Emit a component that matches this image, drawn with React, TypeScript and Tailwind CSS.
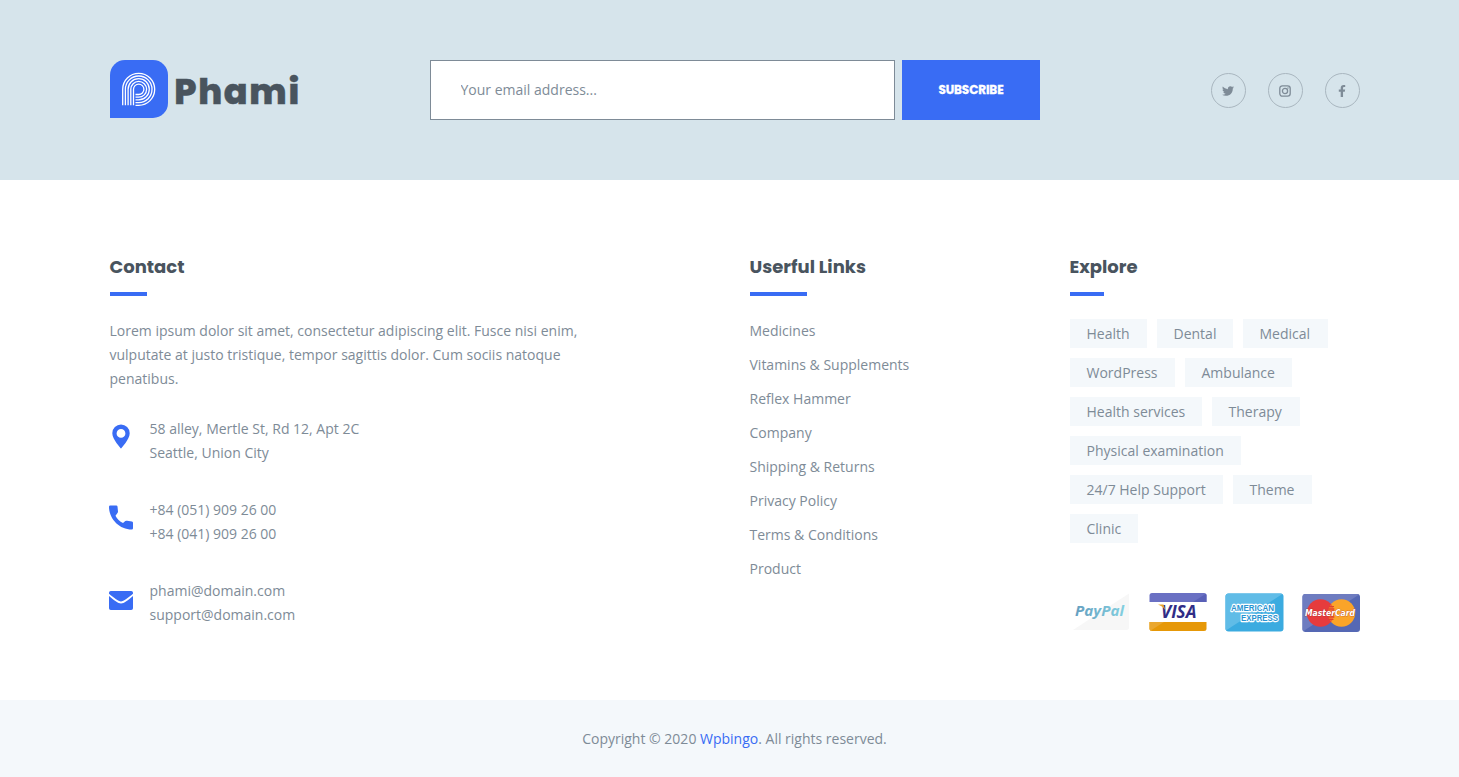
import React from "react";
import { FaTwitter, FaInstagram, FaFacebookF } from "react-icons/fa";

const display = "font-['Poppins','Inter',sans-serif] font-bold text-[#49545e]";

function Logo() {
  const rings = [16, 13.3, 10.6, 7.9, 5.2];
  return (
    <div className="flex w-80 shrink-0">
      <svg width="58" height="58" viewBox="0 0 58 58" className="shrink-0">
        <path d="M15 0H43A15 15 0 0 1 58 15V43A15 15 0 0 1 43 58H0V15A15 15 0 0 1 15 0Z" fill="#396cf4" />
        <g fill="none" stroke="#fff" strokeWidth="1.3">
          {rings.map((r) => (
            <path key={r} d={`M${28.7 - r} 45.200V29.300A${r} ${r} 0 1 1 28.700 ${29.3 + r}H25.500`} />
          ))}
        </g>
      </svg>
      <svg width="140" height="58" viewBox="0 0 140 58" className="shrink-0">
        <text x="6.2" y="44" textLength="125" lengthAdjust="spacing" fill="#49545e" stroke="#49545e" strokeWidth="0.4" className="font-['Poppins','Inter',sans-serif] text-[35px] font-extrabold">Phami</text>
      </svg>
    </div>
  );
}

function Heading({ children, bar }: { children: string; bar: string }) {
  return (
    <div className="h-[63px] shrink-0">
      <h2 className={`${display} h-[36px] whitespace-nowrap text-[18px] leading-[22px]`}>{children}</h2>
      <div className={`h-1 bg-[#396cf4] ${bar}`} />
    </div>
  );
}

const contacts = [
  {
    lines: ["58 alley, Mertle St, Rd 12, Apt 2C", "Seattle, Union City"],
    icon: <path fillRule="evenodd" d="M12 0.500a8.700 8.700 0 0 0-8.700 8.700C3.300 15.500 12 24.500 12 24.500s8.700-9 8.700-15.300A8.700 8.700 0 0 0 12 0.500Zm0 4.500a4.400 4.400 0 1 1 0 8.800 4.400 4.400 0 0 1 0-8.800Z" />,
  },
  {
    lines: ["+84 (051) 909 26 00", "+84 (041) 909 26 00"],
    icon: <path transform="translate(0 .5)" d="M1.2 0H7.3Q8.3 0 8.5 1L9 6Q9 7 8.3 7.7L6.5 10.2C8 13.6 10.8 16 14 17.4L16.3 15.5Q17 15 18 15.2L23 16Q24 16.2 24 17.2V22.8Q24 24 22.8 24C10.5 24 0 13.5 0 1.2Q0 0 1.2 0Z" />,
  },
  {
    lines: ["phami@domain.com", "support@domain.com"],
    icon: <path d="M1.800 5H22.200Q24 5 24 6.800V7.800C19.500 11.500 14.500 15.500 12 15.500S4.500 11.500 0 7.800V6.800Q0 5 1.800 5ZM0 10C5 14.200 9 17.500 12 17.500S19 14.200 24 10V22.200Q24 24 22.200 24H1.800Q0 24 0 22.200Z" />,
  },
];

const links = ["Medicines", "Vitamins & Supplements", "Reflex Hammer", "Company", "Shipping & Returns", "Privacy Policy", "Terms & Conditions", "Product"];

const tags = [
  ["Health", "w-[77px]"],
  ["Dental", "w-[76px]"],
  ["Medical", "w-[85px]"],
  ["WordPress", "w-[105px]"],
  ["Ambulance", "w-[107px]"],
  ["Health services", "w-[132px]"],
  ["Therapy", "w-[88px]"],
  ["Physical examination", "w-[171px]"],
  ["24/7 Help Support", "w-[153px]"],
  ["Theme", "w-[79px]"],
  ["Clinic", "w-[68px]"],
];

function Payments() {
  return (
    <svg width="290" height="42" viewBox="0 0 290 42" className="mt-[48px]">
      <defs>
        <linearGradient id="paypal" x2="1">
          <stop stopColor="#659fc0" />
          <stop offset="1" stopColor="#82cfe0" />
        </linearGradient>
        <clipPath id="visa"><rect x="79.500" y="2" width="57" height="38" rx="2.5" /></clipPath>
        <clipPath id="amex"><rect x="155.500" y="2.500" width="58" height="38" rx="3" /></clipPath>
        <clipPath id="master"><rect x="232.500" y="3" width="57.500" height="38" rx="3" /></clipPath>
      </defs>
      <path d="M3 39 59 2.500V36.500Q59 39 56 39Z" fill="#f7f7f7" />
      <text x="5" y="24.500" textLength="49" lengthAdjust="spacingAndGlyphs" fill="url(#paypal)" className="font-['Open_Sans',sans-serif] text-[15px] font-bold italic">PayPal</text>

      <g clipPath="url(#visa)">
        <path fill="#fff" d="M79 2h58v38H79z" />
        <path fill="#6a70c3" d="M79 2h58v9H79z" />
        <path fill="#5960b7" d="M137 2v9h-14z" />
        <path fill="#e69808" d="M79 31h58v9H79z" />
        <path fill="#eaa72e" d="M79 31h15l-14 9h-1z" />
      </g>
      <text x="91" y="26.500" textLength="35.500" lengthAdjust="spacingAndGlyphs" fill="#302d86" className="font-['Open_Sans',sans-serif] text-[17.5px] font-bold italic">VISA</text>
      <path d="M88 13.500h5.500l2 6q-2-4-7.500-6Z" fill="#e8a32a" />

      <g clipPath="url(#amex)">
        <path fill="#3babe0" d="M155 2h59v39h-59z" />
        <path fill="#60bce7" d="M155 2h59L155 40z" />
      </g>
      <g stroke="#fff" strokeWidth="2.4" strokeLinejoin="round" fill="#2994d2" paintOrder="stroke" className="font-['Liberation_Sans',sans-serif] text-[9px] font-bold">
        <text x="161" y="20" textLength="43" lengthAdjust="spacingAndGlyphs">AMERICAN</text>
        <text x="171" y="30" textLength="37" lengthAdjust="spacingAndGlyphs">EXPRESS</text>
      </g>

      <g clipPath="url(#master)">
        <path fill="#5568b4" d="M232 3h58v38h-58z" />
        <path fill="#6e7cc0" d="M232 3h58l-58 38z" />
      </g>
      <circle cx="271.500" cy="22" r="13.7" fill="#faa429" />
      <circle cx="250.500" cy="22" r="13.700" fill="#e63b3d" />
      <path d="M261 13.200a13.700 13.700 0 0 1 0 17.600a13.700 13.700 0 0 1 0-17.600Z" fill="#f36a31" />
      <path d="M259 15.500h5M257.500 18h7M257.500 26h7M258.500 28.500h5" stroke="#de432c" strokeWidth="1" />
      <text x="235" y="24.500" textLength="50" lengthAdjust="spacingAndGlyphs" fill="#fff" stroke="#a52a2c" strokeWidth="0.5" paintOrder="stroke" className="font-['DejaVu_Sans',sans-serif] text-[8.5px] font-bold italic">MasterCard</text>
    </svg>
  );
}

export default function App() {
  return (
    <div className="h-[777px] w-full overflow-hidden bg-white font-['Open_Sans',sans-serif] text-[14px] leading-6 text-[#7e8b97]">
      <section className="flex h-[180px] bg-[#d6e4eb] pl-[110px] pt-[60px]">
        <Logo />
        <form className="flex gap-[7px]">
          <input
            placeholder="Your email address..."
            className="h-[60px] w-[465px] border border-[#7e8b97] bg-white px-[29.5px] pb-[2px] text-[14px] text-[#7e8b97] outline-none placeholder:text-[#7e8b97] placeholder:opacity-100"
          />
          <button type="button" className="h-[60px] w-[138px] whitespace-nowrap bg-[#396cf4] font-['Poppins','Inter',sans-serif] text-[12px] font-bold tracking-[-0.1px] text-white [-webkit-text-stroke:0.3px_white]">
            SUBSCRIBE
          </button>
        </form>
        <div className="ml-[171px] mt-[13px] flex gap-[22px]">
          {[FaTwitter, FaInstagram, FaFacebookF].map((Icon, i) => (
            <a key={i} className="flex size-[35px] items-center justify-center rounded-full border border-[#a9b6bf] pr-[1px] pt-[1px] text-[#7e8b97]">
              {i === 1 ? (
                <svg width="12" height="12" viewBox="0 0 12 12" fill="none" stroke="currentColor" strokeWidth="1.300">
                  <rect x=".8" y=".8" width="10.400" height="10.400" rx="2.600" />
                  <circle cx="6" cy="6" r="2.600" />
                  <circle cx="9" cy="3" r=".7" fill="currentColor" stroke="none" />
                </svg>
              ) : (
                <Icon size={12} />
              )}
            </a>
          ))}
        </div>
      </section>

      <section className="flex h-[520px] pl-[109.5px] pt-[76px]">
        <div className="w-[640px] shrink-0">
          <Heading bar="w-[37px]">Contact</Heading>
          <p className="w-[500px]">
            Lorem ipsum dolor sit amet, consectetur adipiscing elit. Fusce nisi enim,<br />
            vulputate at justo tristique, tempor sagittis dolor. Cum sociis natoque<br />
            penatibus.
          </p>
          <div className="mt-[26px] flex flex-col gap-[33px]">
            {contacts.map((c) => (
              <div key={c.lines[0]} className="flex h-12 gap-4">
                <svg width="24" height="25" viewBox="0 0 24 25" fill="#396cf4" className="-ml-[0.5px] mr-[0.5px] mt-[7px] shrink-0">{c.icon}</svg>
                <div>
                  {c.lines.map((l) => <div key={l}>{l}</div>)}
                </div>
              </div>
            ))}
          </div>
        </div>
        <div className="w-80 shrink-0">
          <Heading bar="w-[57px]">Userful Links</Heading>
          <ul className="flex flex-col gap-[10px]">
            {links.map((l) => <li key={l}>{l}</li>)}
          </ul>
        </div>
        <div className="w-[290px] shrink-0">
          <Heading bar="w-[34px]">Explore</Heading>
          <div className="flex flex-wrap gap-[10px]">
            {tags.map(([name, width]) => (
              <span key={name} className={`h-[29px] whitespace-nowrap bg-[#f4f8fb] pl-[17px] leading-[30px] ${width}`}>{name}</span>
            ))}
          </div>
          <Payments />
        </div>
      </section>

      <footer className="flex h-[77px] justify-center bg-[#f4f8fb] pl-[10px] pt-[27px]">
        <p>Copyright © 2020 <a className="text-[#396cf4]">Wpbingo</a>. All rights reserved.</p>
      </footer>
    </div>
  );
}
